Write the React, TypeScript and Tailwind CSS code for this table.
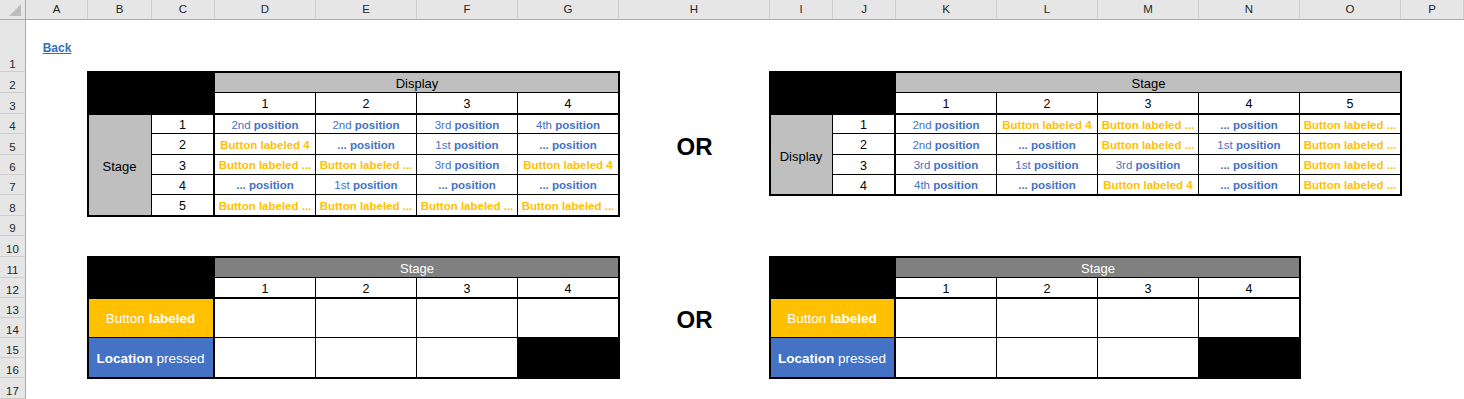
import React from "react";

const colLetters = ["A", "B", "C", "D", "E", "F", "G", "H", "I", "J", "K", "L", "M", "N", "O", "P"];
const colWidths = [
  "w-[62px]", "w-[64px]", "w-[63px]", "w-[101px]", "w-[101px]", "w-[101px]", "w-[101px]", "w-[151px]",
  "w-[63px]", "w-[63px]", "w-[101px]", "w-[101px]", "w-[101px]", "w-[101px]", "w-[101px]", "w-[63px]",
];
const rowHeights = [
  "h-[52px]", "h-[21px]", "h-[21px]", "h-[20px]", "h-[21px]", "h-[20px]", "h-[20px]", "h-[21px]", "h-[20px]",
  "h-[21px]", "h-[21px]", "h-[20px]", "h-[20px]", "h-[20px]", "h-[20px]", "h-[20px]", "h-[21px]",
];

const leftTop = [
  ["2nd position", "2nd position", "3rd position", "4th position"],
  ["Button labeled 4", "... position", "1st position", "... position"],
  ["Button labeled ...", "Button labeled ...", "3rd position", "Button labeled 4"],
  ["... position", "1st position", "... position", "... position"],
  ["Button labeled ...", "Button labeled ...", "Button labeled ...", "Button labeled ..."],
];

const rightTop = [
  ["2nd position", "Button labeled 4", "Button labeled ...", "... position", "Button labeled ..."],
  ["2nd position", "... position", "Button labeled ...", "1st position", "Button labeled ..."],
  ["3rd position", "1st position", "3rd position", "... position", "Button labeled ..."],
  ["4th position", "... position", "Button labeled 4", "... position", "Button labeled ..."],
];

const cell = "flex items-center justify-center whitespace-nowrap overflow-hidden border-black pt-[3px]";

function Content({ v }: { v: string }) {
  if (v.startsWith("Button")) {
    return <span className="font-bold text-[#ffc000]">{v}</span>;
  }
  const pre = v.replace(" position", "");
  return (
    <span className="text-[#4472c4]">
      <span className={pre === "..." ? "font-bold" : "font-normal"}>{pre}</span>
      <span className="font-bold"> position</span>
    </span>
  );
}

function TopTable({
  place,
  title,
  side,
  titleSpan,
  sideSpan,
  data,
}: {
  place: string;
  title: string;
  side: string;
  titleSpan: string;
  sideSpan: string;
  data: string[][];
}) {
  const n = data[0].length;
  return (
    <div
      className={`${place} grid grid-cols-subgrid grid-rows-subgrid outline-2 outline-solid outline-black outline-offset-[-1px] bg-white`}
    >
      <div className="col-span-2 row-span-2 bg-black" />
      <div className={`${titleSpan} ${cell} bg-[#bfbfbf] border-b text-[13px] text-black`}>{title}</div>
      {Array.from({ length: n }, (_, i) => (
        <div key={i} className={`${cell} border-r border-b text-[12.5px] text-black`}>
          {i + 1}
        </div>
      ))}
      <div className={`${sideSpan} ${cell} bg-[#bfbfbf] border-t border-r text-[13px] text-black`}>{side}</div>
      {data.map((row, r) => (
        <React.Fragment key={r}>
          <div className={`${cell} ${r === 0 ? "border-t" : ""} border-r-2 border-b text-[12.5px] text-black`}>
            {r + 1}
          </div>
          {row.map((v, c) => (
            <div key={c} className={`${cell} ${r === 0 ? "border-t" : ""} border-r border-b text-[11.5px]`}>
              <Content v={v} />
            </div>
          ))}
        </React.Fragment>
      ))}
    </div>
  );
}

function BottomTable({ place }: { place: string }) {
  return (
    <div
      className={`${place} grid grid-cols-subgrid grid-rows-subgrid outline-2 outline-solid outline-black outline-offset-[-1px] bg-white`}
    >
      <div className="col-span-2 row-span-2 bg-black" />
      <div className={`col-span-4 ${cell} bg-[#808080] border-b text-[13px] text-white`}>Stage</div>
      {[1, 2, 3, 4].map((i) => (
        <div key={i} className={`${cell} border-r border-b text-[12.5px] text-black`}>
          {i}
        </div>
      ))}
      <div className={`col-span-2 row-span-2 ${cell} bg-[#ffc000] border-t border-r-2 border-b text-[13.5px] text-white`}>
        <span className="font-normal">Button</span>
        <span className="font-bold">&nbsp;labeled</span>
      </div>
      {[1, 2, 3, 4].map((i) => (
        <div key={i} className="row-span-2 border-t border-r border-b border-black bg-white" />
      ))}
      <div className={`col-span-2 row-span-2 ${cell} bg-[#4472c4] border-r-2 text-[13.5px] text-white`}>
        <span className="font-bold">Location</span>
        <span className="font-normal">&nbsp;pressed</span>
      </div>
      {[1, 2, 3].map((i) => (
        <div key={i} className="row-span-2 border-r border-b border-black bg-white" />
      ))}
      <div className="row-span-2 bg-black" />
    </div>
  );
}

export default function App() {
  return (
    <div className="w-[1464px] h-[399px] overflow-hidden bg-white font-['Liberation_Sans',Arial,sans-serif] flex flex-col">
      {/* column headers */}
      <div className="flex h-[20px] shrink-0">
        <div className="w-[26px] h-[20px] shrink-0 bg-[#e6e6e6] border-r border-b border-[#ababab] flex items-end justify-end pr-[4px] pb-[3px]">
          <svg width="12" height="12" viewBox="0 0 12 12">
            <polygon points="12,0 12,12 0,12" fill="#bcbcbc" />
          </svg>
        </div>
        {colLetters.map((l, i) => (
          <div
            key={l}
            className={`${colWidths[i]} h-[20px] shrink-0 bg-[#e6e6e6] border-r border-r-[#cdcdcd] border-b border-b-[#ababab] flex items-center justify-center pt-[1px] text-[11.5px] text-[#262626]`}
          >
            {l}
          </div>
        ))}
      </div>
      <div className="flex flex-1">
        {/* row headers */}
        <div className="flex flex-col w-[26px] shrink-0">
          {rowHeights.map((h, i) => (
            <div
              key={i}
              className={`${h} w-[26px] shrink-0 bg-[#e6e6e6] border-r border-r-[#ababab] border-b border-b-[#cdcdcd] flex items-end justify-center pb-0 leading-[14px] text-[11.5px] text-[#262626]`}
            >
              {i + 1}
            </div>
          ))}
        </div>
        {/* sheet body */}
        <div className="grid grid-cols-[62px_64px_63px_101px_101px_101px_101px_151px_63px_63px_101px_101px_101px_101px_101px_63px] grid-rows-[52px_21px_21px_20px_21px_20px_20px_21px_20px_21px_21px_20px_20px_20px_20px_20px_21px]">
          <div className="col-start-1 row-start-1 flex items-center justify-center pt-[3px]">
            <span className="text-[12px] font-bold text-[#2f6fc0] underline">Back</span>
          </div>

          <TopTable
            place="col-start-2 col-end-8 row-start-2 row-end-9"
            title="Display"
            side="Stage"
            titleSpan="col-span-4"
            sideSpan="row-span-5"
            data={leftTop}
          />

          <div className="col-start-8 row-start-4 row-span-3 flex items-center justify-center pt-[4px] text-[24px] font-bold text-black">
            OR
          </div>

          <TopTable
            place="col-start-9 col-end-16 row-start-2 row-end-8"
            title="Stage"
            side="Display"
            titleSpan="col-span-5"
            sideSpan="row-span-4"
            data={rightTop}
          />

          <BottomTable place="col-start-2 col-end-8 row-start-11 row-end-17" />

          <div className="col-start-8 row-start-13 row-span-2 flex items-center justify-center pt-[4px] text-[24px] font-bold text-black">
            OR
          </div>

          <BottomTable place="col-start-9 col-end-15 row-start-11 row-end-17" />
        </div>
      </div>
    </div>
  );
}
